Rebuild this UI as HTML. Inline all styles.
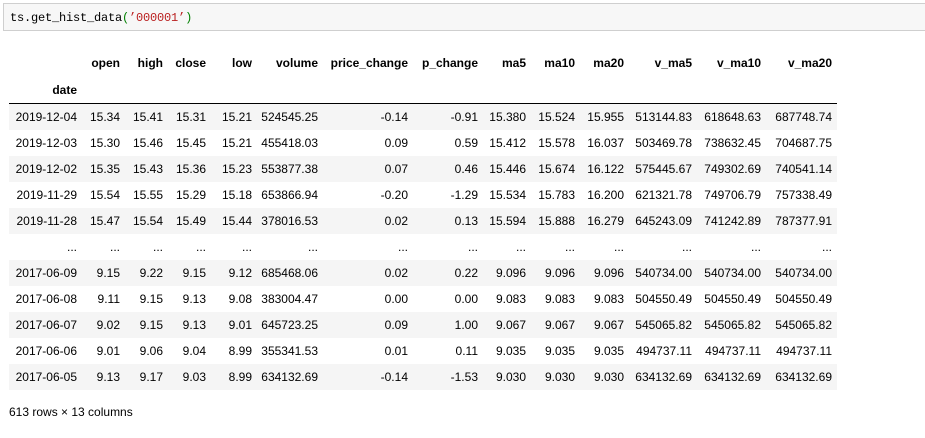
<!DOCTYPE html>
<html><head><meta charset="utf-8"><style>
body{margin:0;width:925px;height:438px;background:#fff;overflow:hidden;font-family:"Liberation Sans",Arial,sans-serif;font-size:12px;color:#000;position:relative}
.inp{position:absolute;left:3px;top:3px;width:930px;height:28px;border:1px solid #cfcfcf;background:#f7f7f7;box-sizing:border-box}
.inp span.c{position:absolute;left:6px;top:7px;font-family:"Liberation Mono","Noto Sans CJK SC",monospace;font-size:12px;letter-spacing:-0.2px}
.r{color:#ba2121}.g{color:#008000}
table{position:absolute;left:9px;top:50px;border-collapse:collapse;table-layout:fixed;width:828px}
td,th{text-align:right;padding:0 5px 0 0;height:26px;white-space:nowrap;overflow:visible}
th{font-weight:bold}
thead tr:last-child th{height:27px;border-bottom:1px solid #000}
tbody tr:nth-child(odd){background:#f5f5f5}
tbody th{font-weight:normal}
.ft{position:absolute;left:9px;top:405px}
</style></head><body>
<div class="inp"><span class="c">ts.get_hist_data<span class="g">(</span><span class="r">’000001’</span><span class="g">)</span></span></div>
<table>
<colgroup><col style="width:73px"><col style="width:43px"><col style="width:43px"><col style="width:43px"><col style="width:46px"><col style="width:66px"><col style="width:90px"><col style="width:70px"><col style="width:48px"><col style="width:49px"><col style="width:49px"><col style="width:68px"><col style="width:69px"><col style="width:71px"></colgroup>
<thead>
<tr><th></th><th>open</th><th>high</th><th>close</th><th>low</th><th>volume</th><th>price_change</th><th>p_change</th><th>ma5</th><th>ma10</th><th>ma20</th><th>v_ma5</th><th>v_ma10</th><th>v_ma20</th></tr>
<tr><th>date</th><th></th><th></th><th></th><th></th><th></th><th></th><th></th><th></th><th></th><th></th><th></th><th></th><th></th></tr>
</thead>
<tbody>
<tr><th>2019-12-04</th><td>15.34</td><td>15.41</td><td>15.31</td><td>15.21</td><td>524545.25</td><td>-0.14</td><td>-0.91</td><td>15.380</td><td>15.524</td><td>15.955</td><td>513144.83</td><td>618648.63</td><td>687748.74</td></tr>
<tr><th>2019-12-03</th><td>15.30</td><td>15.46</td><td>15.45</td><td>15.21</td><td>455418.03</td><td>0.09</td><td>0.59</td><td>15.412</td><td>15.578</td><td>16.037</td><td>503469.78</td><td>738632.45</td><td>704687.75</td></tr>
<tr><th>2019-12-02</th><td>15.35</td><td>15.43</td><td>15.36</td><td>15.23</td><td>553877.38</td><td>0.07</td><td>0.46</td><td>15.446</td><td>15.674</td><td>16.122</td><td>575445.67</td><td>749302.69</td><td>740541.14</td></tr>
<tr><th>2019-11-29</th><td>15.54</td><td>15.55</td><td>15.29</td><td>15.18</td><td>653866.94</td><td>-0.20</td><td>-1.29</td><td>15.534</td><td>15.783</td><td>16.200</td><td>621321.78</td><td>749706.79</td><td>757338.49</td></tr>
<tr><th>2019-11-28</th><td>15.47</td><td>15.54</td><td>15.49</td><td>15.44</td><td>378016.53</td><td>0.02</td><td>0.13</td><td>15.594</td><td>15.888</td><td>16.279</td><td>645243.09</td><td>741242.89</td><td>787377.91</td></tr>
<tr><th>...</th><td>...</td><td>...</td><td>...</td><td>...</td><td>...</td><td>...</td><td>...</td><td>...</td><td>...</td><td>...</td><td>...</td><td>...</td><td>...</td></tr>
<tr><th>2017-06-09</th><td>9.15</td><td>9.22</td><td>9.15</td><td>9.12</td><td>685468.06</td><td>0.02</td><td>0.22</td><td>9.096</td><td>9.096</td><td>9.096</td><td>540734.00</td><td>540734.00</td><td>540734.00</td></tr>
<tr><th>2017-06-08</th><td>9.11</td><td>9.15</td><td>9.13</td><td>9.08</td><td>383004.47</td><td>0.00</td><td>0.00</td><td>9.083</td><td>9.083</td><td>9.083</td><td>504550.49</td><td>504550.49</td><td>504550.49</td></tr>
<tr><th>2017-06-07</th><td>9.02</td><td>9.15</td><td>9.13</td><td>9.01</td><td>645723.25</td><td>0.09</td><td>1.00</td><td>9.067</td><td>9.067</td><td>9.067</td><td>545065.82</td><td>545065.82</td><td>545065.82</td></tr>
<tr><th>2017-06-06</th><td>9.01</td><td>9.06</td><td>9.04</td><td>8.99</td><td>355341.53</td><td>0.01</td><td>0.11</td><td>9.035</td><td>9.035</td><td>9.035</td><td>494737.11</td><td>494737.11</td><td>494737.11</td></tr>
<tr><th>2017-06-05</th><td>9.13</td><td>9.17</td><td>9.03</td><td>8.99</td><td>634132.69</td><td>-0.14</td><td>-1.53</td><td>9.030</td><td>9.030</td><td>9.030</td><td>634132.69</td><td>634132.69</td><td>634132.69</td></tr>
</tbody></table>
<div class="ft">613 rows × 13 columns</div>
</body></html>
